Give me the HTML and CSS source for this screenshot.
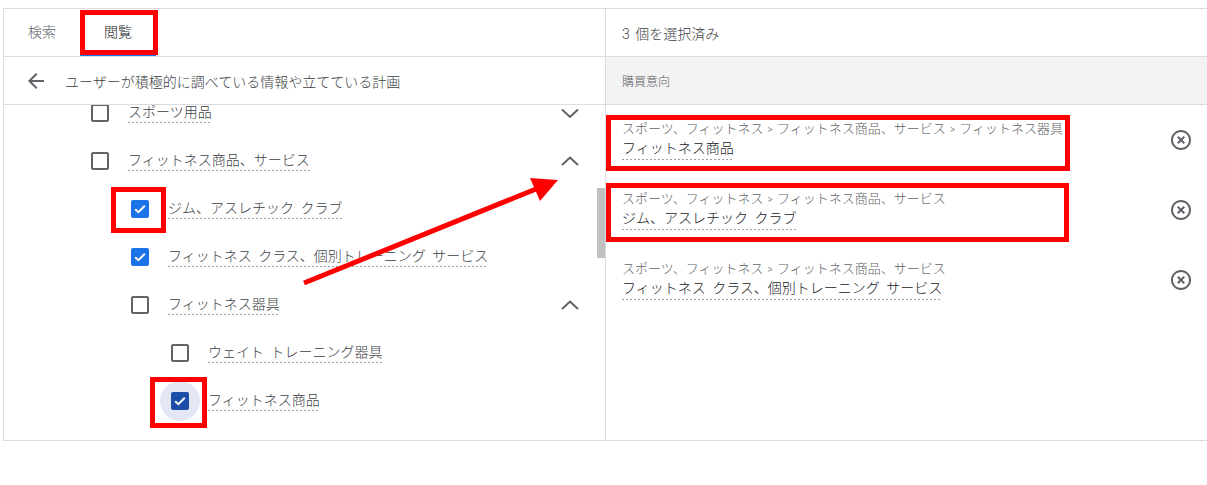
FILE: index.html
```html
<!DOCTYPE html>
<html lang="ja">
<head>
<meta charset="utf-8">
<title>閲覧</title>
<link rel="stylesheet" href="styles.css">
</head>
<body>
<div class="frame">
  <section class="browse">
    <div class="tabs">
      <div class="tab">検索</div>
      <div class="tab active">閲覧</div>
    </div>
    <div class="backrow">
      <svg class="ico" width="24" height="24" viewBox="0 0 24 24"><path d="M20 11H7.83l5.59-5.59L12 4l-8 8 8 8 1.41-1.41L7.83 13H20v-2z" fill="#5f6368"/></svg>
      <span>ユーザーが積極的に調べている情報や立てている計画</span>
    </div>
    <div class="list">
      <div class="list-inner">
        <div class="row l0">
          <span class="cb"></span><span class="label">スポーツ用品</span>
          <svg class="chev" width="24" height="24" viewBox="0 0 24 24"><polyline points="4,8.5 12,16 20,8.5" fill="none" stroke="#5f6368" stroke-width="2"/></svg>
        </div>
        <div class="row l0">
          <span class="cb"></span><span class="label">フィットネス商品、サービス</span>
          <svg class="chev" width="24" height="24" viewBox="0 0 24 24"><polyline points="4,16 12,8.5 20,16" fill="none" stroke="#5f6368" stroke-width="2"/></svg>
        </div>
        <div class="row l1">
          <span class="cb on"><svg width="14" height="14" viewBox="0 0 14 14"><polyline points="2.2,7.2 5.4,10.2 11.8,3.8" fill="none" stroke="#fff" stroke-width="2"/></svg></span><span class="label">ジム、アスレチック クラブ</span>
        </div>
        <div class="row l1">
          <span class="cb on"><svg width="14" height="14" viewBox="0 0 14 14"><polyline points="2.2,7.2 5.4,10.2 11.8,3.8" fill="none" stroke="#fff" stroke-width="2"/></svg></span><span class="label">フィットネス クラス、個別トレーニング サービス</span>
        </div>
        <div class="row l1">
          <span class="cb"></span><span class="label">フィットネス器具</span>
          <svg class="chev" width="24" height="24" viewBox="0 0 24 24"><polyline points="4,16 12,8.5 20,16" fill="none" stroke="#5f6368" stroke-width="2"/></svg>
        </div>
        <div class="row l2">
          <span class="cb"></span><span class="label">ウェイト トレーニング器具</span>
        </div>
        <div class="row l2">
          <span class="cb on focus"><svg width="14" height="14" viewBox="0 0 14 14"><polyline points="2.2,7.2 5.4,10.2 11.8,3.8" fill="none" stroke="#fff" stroke-width="2"/></svg></span><span class="label">フィットネス商品</span>
        </div>
      </div>
      <div class="thumb"></div>
    </div>
  </section>
  <section class="selected">
    <div class="sel-head">3 個を選択済み</div>
    <div class="group">購買意向</div>
    <div class="item">
      <div class="txt">
        <div class="crumb">スポーツ、フィットネス <span class="gt">&gt;</span> フィットネス商品、サービス <span class="gt">&gt;</span> フィットネス器具</div>
        <span class="name">フィットネス商品</span>
      </div>
      <svg class="ico" width="24" height="24" viewBox="0 0 24 24"><path d="M14.59 8L12 10.59 9.41 8 8 9.41 10.59 12 8 14.59 9.41 16 12 13.41 14.59 16 16 14.59 13.41 12 16 9.41 14.59 8zM12 2C6.47 2 2 6.47 2 12s4.47 10 10 10 10-4.47 10-10S17.53 2 12 2zm0 18c-4.41 0-8-3.59-8-8s3.59-8 8-8 8 3.59 8 8-3.59 8-8 8z" fill="#5f6368"/></svg>
    </div>
    <div class="item">
      <div class="txt">
        <div class="crumb">スポーツ、フィットネス <span class="gt">&gt;</span> フィットネス商品、サービス</div>
        <span class="name">ジム、アスレチック クラブ</span>
      </div>
      <svg class="ico" width="24" height="24" viewBox="0 0 24 24"><path d="M14.59 8L12 10.59 9.41 8 8 9.41 10.59 12 8 14.59 9.41 16 12 13.41 14.59 16 16 14.59 13.41 12 16 9.41 14.59 8zM12 2C6.47 2 2 6.47 2 12s4.47 10 10 10 10-4.47 10-10S17.53 2 12 2zm0 18c-4.41 0-8-3.59-8-8s3.59-8 8-8 8 3.59 8 8-3.59 8-8 8z" fill="#5f6368"/></svg>
    </div>
    <div class="item">
      <div class="txt">
        <div class="crumb">スポーツ、フィットネス <span class="gt">&gt;</span> フィットネス商品、サービス</div>
        <span class="name">フィットネス クラス、個別トレーニング サービス</span>
      </div>
      <svg class="ico" width="24" height="24" viewBox="0 0 24 24"><path d="M14.59 8L12 10.59 9.41 8 8 9.41 10.59 12 8 14.59 9.41 16 12 13.41 14.59 16 16 14.59 13.41 12 16 9.41 14.59 8zM12 2C6.47 2 2 6.47 2 12s4.47 10 10 10 10-4.47 10-10S17.53 2 12 2zm0 18c-4.41 0-8-3.59-8-8s3.59-8 8-8 8 3.59 8 8-3.59 8-8 8z" fill="#5f6368"/></svg>
    </div>
  </section>
</div>
<svg class="annot" width="1207" height="485" viewBox="0 0 1207 485">
  <g fill="none" stroke="#ff0000" stroke-width="5">
    <rect x="82.5" y="12.5" width="73" height="40"/>
    <rect x="113.5" y="189.5" width="50" height="41"/>
    <rect x="152.5" y="379.5" width="52" height="46"/>
    <rect x="608.5" y="117.5" width="459" height="51"/>
    <rect x="608.5" y="185.5" width="458" height="54"/>
    <line x1="304" y1="283" x2="536" y2="189" stroke-width="5"/>
  </g>
  <polygon points="558,180 530,178 540,201" fill="#ff0000"/>
</svg>
</body>
</html>
```

FILE: styles.css
```css
html, body {
  margin: 0;
  padding: 0;
}

body {
  position: relative;
  width: 1207px;
  height: 485px;
  overflow: hidden;
  background: #ffffff;
  font-family: Roboto, "Noto Sans CJK JP", sans-serif;
  font-weight: 300;
  color: #3c4043;
}

.frame {
  display: flex;
  margin: 8px 0 0 3px;
  width: 1204px;
  height: 433px;
  box-sizing: border-box;
  border: 1px solid #dadce0;
  border-right: 0;
}

.browse {
  flex: none;
  width: 602px;
  box-sizing: border-box;
  border-right: 1px solid #dadce0;
  display: flex;
  flex-direction: column;
}

.tabs {
  display: flex;
  height: 48px;
  box-sizing: border-box;
  border-bottom: 1px solid #dadce0;
}

.tab {
  padding: 0 24px;
  font-size: 14px;
  line-height: 47px;
  color: #5f6368;
}

.tab.active {
  color: #202124;
  box-shadow: inset 0 -2px 0 #1a73e8;
}

.backrow {
  display: flex;
  align-items: center;
  gap: 17px;
  height: 48px;
  box-sizing: border-box;
  padding-left: 20px;
  border-bottom: 1px solid #dadce0;
  font-size: 14px;
  color: #3c4043;
}

.ico {
  flex: none;
  display: block;
}

.list {
  position: relative;
  flex: 1;
  overflow: hidden;
}

.list-inner {
  margin-top: -16px;
}

.row {
  display: flex;
  align-items: center;
  height: 48px;
  isolation: isolate;
}

.row.l0 { padding-left: 87px; }
.row.l1 { padding-left: 127px; }
.row.l2 { padding-left: 167px; }

.cb {
  position: relative;
  flex: none;
  width: 18px;
  height: 18px;
  box-sizing: border-box;
  border: 2px solid #5f6368;
  border-radius: 2px;
  margin-right: 19px;
  display: flex;
  align-items: center;
  justify-content: center;
}

.cb.on {
  background: #1a73e8;
  border-color: #1a73e8;
}

.cb.on.focus {
  background: #1c4fa5;
  border-color: #1c4fa5;
}

.cb.focus::before {
  content: "";
  position: absolute;
  left: -13px;
  top: -13px;
  width: 40px;
  height: 40px;
  border-radius: 50%;
  background: #e3e8f4;
  z-index: -1;
}

.cb svg {
  display: block;
}

.label,
.name {
  font-size: 14px;
  line-height: 18px;
  padding-bottom: 2px;
  word-spacing: 3px;
  background-image: linear-gradient(to right, #9aa0a6 50%, transparent 50%);
  background-size: 4px 1px;
  background-repeat: repeat-x;
  background-position: left bottom;
}

.label {
  color: #3c4043;
}

.chev {
  margin-left: auto;
  margin-right: 23px;
  display: block;
}

.thumb {
  position: absolute;
  right: 0;
  top: 83px;
  width: 8px;
  height: 70px;
  background: #c1c1c1;
}

.selected {
  flex: 1;
  display: flex;
  flex-direction: column;
}

.sel-head {
  display: flex;
  align-items: center;
  height: 48px;
  box-sizing: border-box;
  padding-left: 16px;
  border-bottom: 1px solid #dadce0;
  font-size: 14px;
  word-spacing: 2px;
  color: #3c4043;
}

.group {
  display: flex;
  align-items: center;
  height: 48px;
  box-sizing: border-box;
  padding-left: 16px;
  border-bottom: 1px solid #dadce0;
  background: #f3f3f3;
  font-size: 12px;
  color: #5f6368;
}

.item {
  display: flex;
  align-items: center;
  height: 70px;
  box-sizing: border-box;
  padding: 0 14px 0 16px;
}

.txt {
  flex: 1;
}

.crumb {
  font-size: 13px;
  line-height: 17px;
  word-spacing: 1px;
  color: #5f6368;
}

.gt {
  font-size: 10px;
}

.name {
  display: inline-block;
  line-height: 19px;
  color: #202124;
}

.annot {
  position: absolute;
  left: 0;
  top: 0;
  pointer-events: none;
}
```
